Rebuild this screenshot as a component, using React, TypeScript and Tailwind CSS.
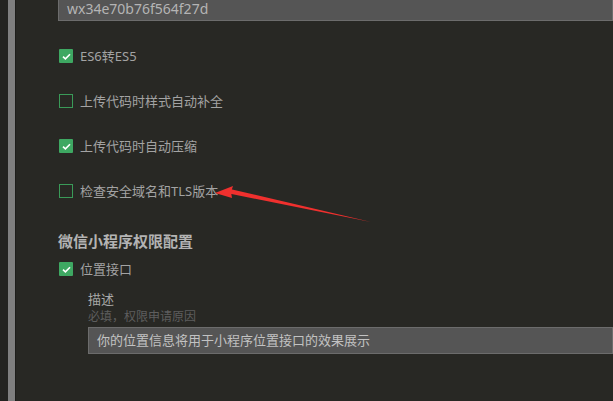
import React from 'react';

const FONT = { fontFamily: '"Microsoft YaHei", "Noto Sans", "Noto Sans CJK SC", sans-serif' };

interface CheckRowProps {
  label: string;
  checked?: boolean;
}

const Check: React.FC<{ checked?: boolean }> = ({ checked }) =>
  checked ? (
    <span className="flex h-[14px] w-[14px] shrink-0 items-center justify-center rounded-[1px] bg-[#3ea862]">
      <svg width="9" height="7" viewBox="0 0 9 7">
        <path d="M1 3.6 L3.4 5.8 L8 1.2" fill="none" stroke="#ffffff" strokeWidth="1.6" />
      </svg>
    </span>
  ) : (
    <span className="block h-[14px] w-[14px] shrink-0 border border-[#3a9a58]" />
  );

const CheckRow: React.FC<CheckRowProps> = ({ label, checked }) => (
  <div className="flex h-[20px] items-center gap-[7px] pl-[1px]">
    <Check checked={checked} />
    <span className="text-[13px] leading-[20px] text-[#a3a3a3]">{label}</span>
  </div>
);

export default function App() {
  return (
    <div className="relative flex h-[401px] w-[613px] overflow-hidden bg-[#282824]" style={FONT}>
      {/* left rail */}
      <div className="w-[8px] bg-[#232320]" />
      <div className="w-[7px] bg-[#7f7f7f]" />
      <div className="w-[1px] bg-[#1e1e1b]" />

      <div className="flex-1 pl-[42px]">
        {/* appid field, cut off at the top */}
        <div className="flex h-[21px] items-end border-x border-b border-[#6c6c6c] bg-[#555555] pb-[2px] pl-[8px]">
          <span className="text-[14px] leading-[18px] text-[#b4b4b4]">wx34e70b76f564f27d</span>
        </div>

        <div className="mt-[25px] flex flex-col gap-[25px]">
          <CheckRow label="ES6转ES5" checked />
          <CheckRow label="上传代码时样式自动补全" />
          <CheckRow label="上传代码时自动压缩" checked />
          <CheckRow label="检查安全域名和TLS版本" />
        </div>

        <div className="mt-[30px] text-[15px] font-bold leading-[20px] text-[#b3b3b3]">微信小程序权限配置</div>

        <div className="mt-[8px]">
          <CheckRow label="位置接口" checked />
        </div>

        <div className="mt-[11px] pl-[30px]">
          <div className="text-[13px] leading-[18px] text-[#a8a8a8]">描述</div>
          <div className="text-[12px] leading-[18px] text-[#5e5e5e]">必填，权限申请原因</div>
          <div className="mt-[1px] flex h-[27px] items-center border border-[#6c6c6c] bg-[#555555] pl-[8px]">
            <span className="text-[13px] text-[#c2c2c2]">你的位置信息将用于小程序位置接口的效果展示</span>
          </div>
        </div>
      </div>

      {/* red annotation arrow */}
      <svg className="pointer-events-none absolute left-0 top-0" width="613" height="401">
        <polygon points="371,222 229,193.5 230,189 " fill="#f0302e" />
        <polygon points="215,193 233,186 231,192 232,198" fill="#f0302e" />
      </svg>
    </div>
  );
}
